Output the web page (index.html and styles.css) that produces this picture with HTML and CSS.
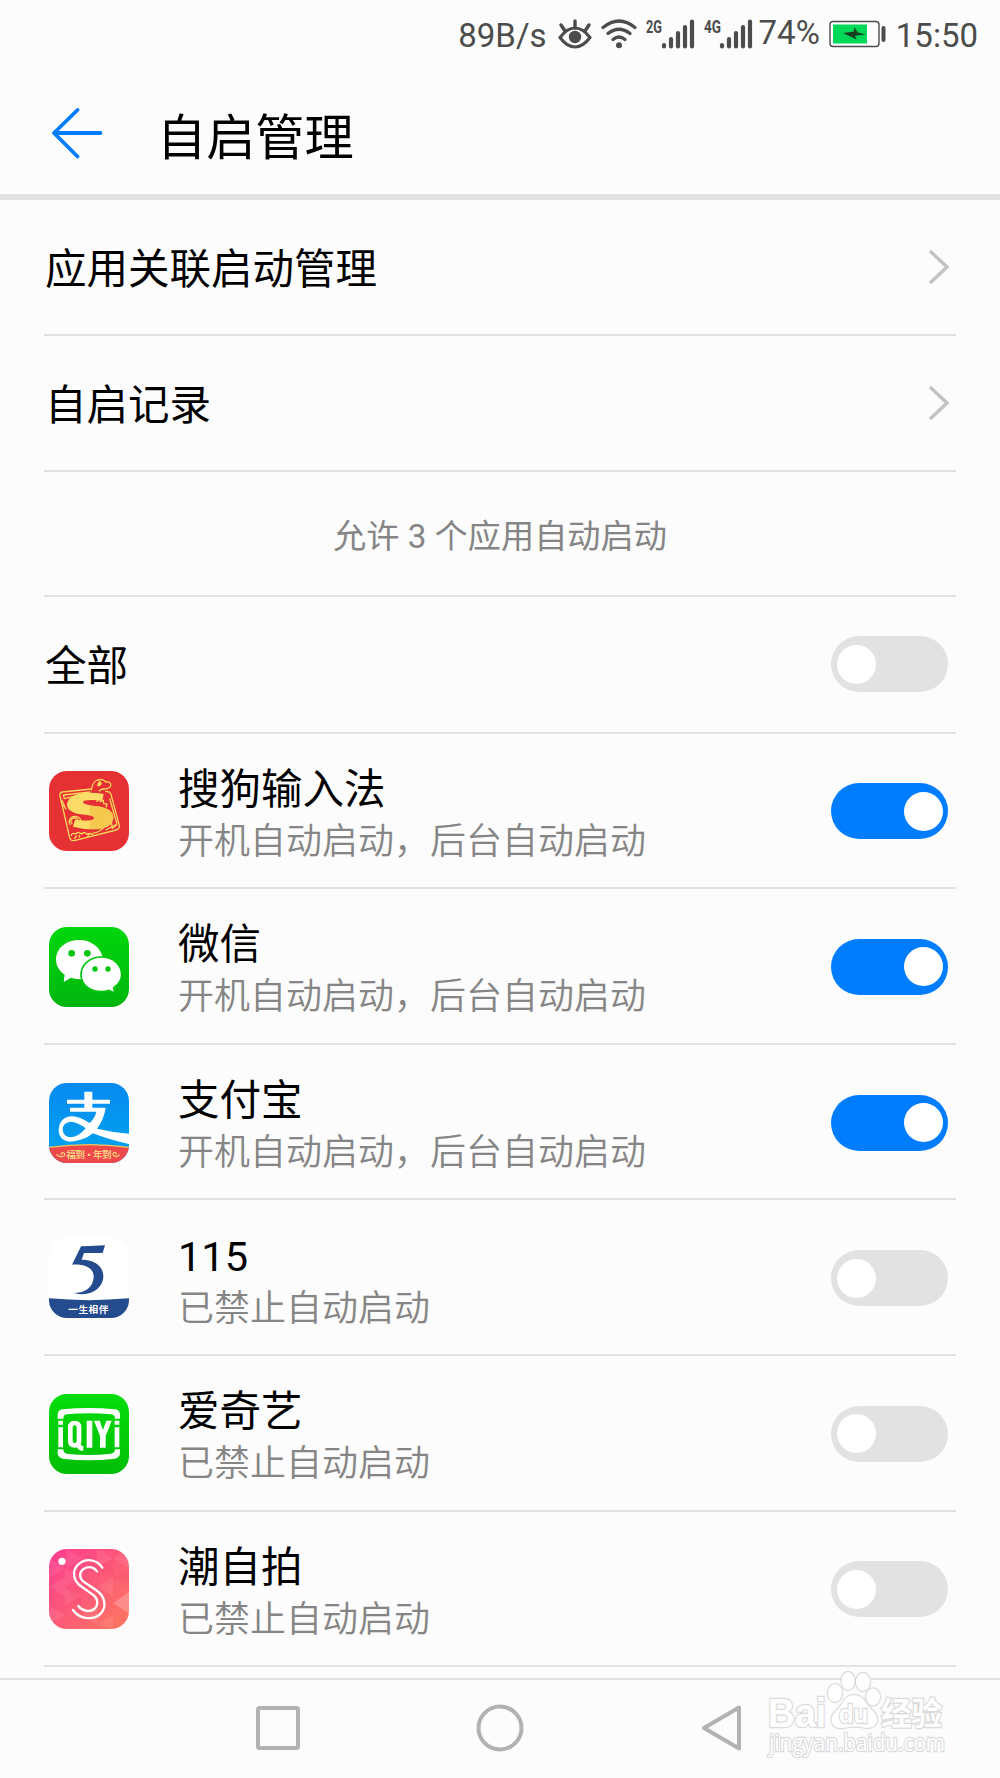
FILE: index.html
```html
<!DOCTYPE html>
<html lang="zh-CN">
<head>
    <meta charset="UTF-8">
    <meta name="viewport" content="width=device-width, initial-scale=1.0">
    <title>自启管理</title>
    <link rel="stylesheet" href="styles.css">
</head>
<body>
    <div class="status-bar">
        <span class="speed">89B/s</span>
        <svg class="eye" viewBox="0 0 34 30" width="34" height="30">
            <path d="M2 18.500Q9 9 17 9T32 18.500Q25 28 17 28T2 18.500Z" fill="none" stroke="#4c4c4c" stroke-width="3"/>
            <circle cx="17" cy="18" r="6.200" fill="#4c4c4c"/>
            <path d="M17 2v7M3 6l4 6M31 6l-4 6" fill="none" stroke="#4c4c4c" stroke-width="3.400" stroke-linecap="round"/>
        </svg>
        <svg class="wifi" viewBox="0 0 36 30" width="36" height="30">
            <path d="M2 8.500Q18-4.500 34 8.500M7 14.500Q18 6 29 14.500M12 20.500Q18 15.500 24 20.500" fill="none" stroke="#4c4c4c" stroke-width="3.200" stroke-linecap="round"/>
            <circle cx="18" cy="26.300" r="3" fill="#4c4c4c"/>
        </svg>
        <svg class="signal" viewBox="0 0 50 32" width="50" height="32">
            <text class="net" x="0" y="14.500" textLength="16" lengthAdjust="spacingAndGlyphs">2G</text>
            <path d="M18 27v1.500M25 21v7.500M32 15v13.500M39 9v19.500M46 3.500v25" stroke="#4c4c4c" stroke-width="4.200" stroke-linecap="round"/>
        </svg>
        <svg class="signal second" viewBox="0 0 50 32" width="50" height="32">
            <text class="net" x="0" y="14.500" textLength="17" lengthAdjust="spacingAndGlyphs">4G</text>
            <path d="M18 27v1.500M25 21v7.500M32 15v13.500M39 9v19.500M46 3.500v25" stroke="#4c4c4c" stroke-width="4.200" stroke-linecap="round"/>
        </svg>
        <span class="percent">74%</span>
        <svg class="battery" viewBox="0 0 58 28" width="58" height="28">
            <rect x="1" y="1.500" width="49" height="25" rx="3" fill="none" stroke="#4c4c4c" stroke-width="1.400"/>
            <rect x="4" y="4.500" width="34" height="19" fill="#00d957"/>
            <path d="M14 13l11 -1.500 0-4.500 4 5.500 8 2-11 1.200 1.500 3.800z" fill="#17401f"/>
            <path d="M54.500 8v12" stroke="#4c4c4c" stroke-width="4" stroke-linecap="round"/>
        </svg>
        <span class="time">15:50</span>
    </div>

    <header class="header">
        <svg class="back" viewBox="0 0 52 52" width="52" height="52">
            <path d="M26.500 3L3 26l23.500 23.500M3 26h46.500" fill="none" stroke="#007dff" stroke-width="3.800" stroke-linecap="round" stroke-linejoin="round"/>
        </svg>
        <h1>自启管理</h1>
    </header>

    <main class="list">
        <div class="row">
            <span class="name">应用关联启动管理</span>
            <svg class="chevron" viewBox="0 0 22 36" width="22" height="36"><path d="M2 2l17 16L2 34"/></svg>
        </div>
        <div class="row">
            <span class="name">自启记录</span>
            <svg class="chevron" viewBox="0 0 22 36" width="22" height="36"><path d="M2 2l17 16L2 34"/></svg>
        </div>
        <div class="row summary">允许 3 个应用自动启动</div>
        <div class="row all">
            <span class="name">全部</span>
            <span class="switch"></span>
        </div>

        <div class="row app">
            <svg class="icon" viewBox="58 63 240 240">
                <rect x="58" y="63" width="240" height="240" fill="#e53034"/>
                <g fill="none" stroke="#f9d65c" stroke-width="4" stroke-linejoin="round">
                    <path d="M185 117L98 126Q89 128 91 138L120 263Q123 273 134 272L260 240Q270 236 269 226L244 133Q240 123 226 124"/>
                    <path d="M182 126L101 135L104 146L160 133M96 150L105 168M99 163L110 178M240 145L262 222L228 240"/>
                    <path d="M122 225a18 16 0 1 1 25 3M128 222a11 10 0 1 1 13 0M200 155l8-8 5 8 8-4 1 10 10 1-3 10M188 250q20-2 35-18M225 230l20-15 3 20 13-10"/>
                    <path d="M124 258q4-12 14-6q8-9 17 0q10-8 17 1q12-7 19 5M134 267l7-10M150 263l-2-8M174 261l4-9"/>
                    <path d="M185 121q3-25 18-31q16-5 26 6q16-2 14 12q-5 9-20 9q-10-1-15 7" fill="#e53034"/>
                </g>
                <path d="M207 94q9-2 9 8q-6 11-14 5z" fill="#f9d65c"/>
                <path d="M222 132L218 152Q205 149 184 150Q160 150 160 157Q161 165 201 169Q250 175 251 203Q250 237 190 238Q160 238 130 230L136 209Q165 213 184 211Q197 208 192 201Q188 196 165 194Q114 190 112 164Q115 129 180 128Q202 128 222 132Z" fill="#fbdc68"/>
                <path d="M180 167Q192 168 201 169Q250 175 251 203Q250 236 180 238V211Q197 210 192 201Q189 197 180 195Z" fill="#f5c94d"/>
            </svg>
            <div class="info"><div class="name">搜狗输入法</div><div class="desc">开机自动启动，后台自动启动</div></div>
            <span class="switch on"></span>
        </div>

        <div class="row app">
            <svg class="icon" viewBox="58 51 240 240">
                <defs><linearGradient id="wechat" x2="0" y2="1"><stop offset="0" stop-color="#00d80c"/><stop offset="1" stop-color="#00b50e"/></linearGradient></defs>
                <rect x="58" y="51" width="240" height="240" fill="url(#wechat)"/>
                <path d="M149 90C108 90 79 116 79 149Q79 176 105 194L102 216L124 203Q137 208 158 208L220 145C214 113 185 90 149 90Z" fill="#fff"/>
                <path d="M216 141C180 141 154 164 154 194C154 224 181 245 216 245Q229 245 238 241L255 250L252 233Q276 217 276 194C276 165 251 141 216 141Z" fill="#fff" stroke="#00c50d" stroke-width="5"/>
                <g fill="#00c50d"><circle cx="126" cy="130" r="10"/><circle cx="173" cy="130" r="10"/><circle cx="196" cy="177" r="8"/><circle cx="235" cy="177" r="8"/></g>
            </svg>
            <div class="info"><div class="name">微信</div><div class="desc">开机自动启动，后台自动启动</div></div>
            <span class="switch on"></span>
        </div>

        <div class="row app">
            <svg class="icon" viewBox="58 52 240 240">
                <defs><linearGradient id="alipay" x2="0" y2="1"><stop offset="0" stop-color="#078af0"/><stop offset="1" stop-color="#00a5ef"/></linearGradient></defs>
                <rect x="58" y="52" width="240" height="240" fill="url(#alipay)"/>
                <path d="M164 78h24v24h53v12h-53v12h40q-5 35-26 63Q245 199 298 204V235Q237 222 190 203Q161 226 122 228Q86 225 87 191Q91 153 127 152Q150 153 180 172Q196 157 200 138H121v-12h43v-12h-52v-12h52z" fill="#fff"/>
                <path d="M168 188Q143 168 122 168Q99 171 99 192Q101 213 123 215Q148 213 168 188Z" fill="#079aef"/>
                <path d="M58 245Q178 229 298 245V292H58Z" fill="#ee494a"/>
                <path d="M58 245Q178 229 298 245" fill="none" stroke="#f8c55d" stroke-width="4"/>
                <g fill="none" stroke="#fbc878" stroke-width="4"><path d="M80 266q10 11 23 5q6-9-4-10q-7 2-3 6M270 266q-8 11-18 4q-5-8 3-10q7 1 4 6"/></g>
                <text class="badge gold" x="110" y="277" textLength="136">福到·年到</text>
            </svg>
            <div class="info"><div class="name">支付宝</div><div class="desc">开机自动启动，后台自动启动</div></div>
            <span class="switch on"></span>
        </div>

        <div class="row app">
            <svg class="icon" viewBox="58 54 240 240">
                <rect x="58" y="54" width="240" height="240" fill="#fff"/>
                <path d="M153 81Q156 77 163 79L226 76L219 99H163L156 119C195 118 221 139 221 169C221 205 181 233 133 219C167 219 192 200 192 170C192 145 169 132 127 134Z" fill="#234b8d"/>
                <path d="M58 235Q178 246 298 235V294H58Z" fill="#234b8d"/>
                <text class="badge" x="116" y="279" textLength="120">一生相伴</text>
            </svg>
            <div class="info"><div class="name">115</div><div class="desc">已禁止自动启动</div></div>
            <span class="switch"></span>
        </div>

        <div class="row app">
            <svg class="icon" viewBox="58 56 240 240">
                <defs><linearGradient id="iqiyi" x2="0" y2="1"><stop offset="0" stop-color="#06dd0b"/><stop offset="1" stop-color="#00be06"/></linearGradient></defs>
                <rect x="58" y="56" width="240" height="240" fill="url(#iqiyi)"/>
                <path d="M84 130V119Q84 104 99 102Q178 94 256 102Q271 104 271 119V130H256Q256 118 244 117Q178 110 111 117Q101 118 101 130ZM84 222H101Q101 233 111 235Q178 243 244 235Q256 233 256 222H271V233Q271 246 256 250Q178 259 99 250Q84 246 84 233Z" fill="#fff"/>
                <g fill="#fff"><path d="M86 136h14v12H86zM86 156h14v60H86zM171 136h17v81h-17zM255 136h14v12h-14zM255 156h14v60h-14zM193 136h17l10 28 10-28h16l-18 46v35h-17v-35z"/></g>
                <path d="M135 143q-13 0-13 13v41q0 13 13 13t13-13v-41q0-13-13-13ZM145 207q3 12 16 13" fill="none" stroke="#fff" stroke-width="14"/>
            </svg>
            <div class="info"><div class="name">爱奇艺</div><div class="desc">已禁止自动启动</div></div>
            <span class="switch"></span>
        </div>

        <div class="row app">
            <svg class="icon" viewBox="58 57 240 240">
                <defs><linearGradient id="selfie" x2="1" y2="1"><stop offset="0" stop-color="#fc3b91"/><stop offset=".5" stop-color="#fc5a78"/><stop offset="1" stop-color="#fd795e"/></linearGradient></defs>
                <rect x="58" y="57" width="240" height="240" fill="url(#selfie)"/>
                <g fill="#fff" fill-opacity=".08">
                    <path d="M110 57l48 28-48 28zM58 85l48 29-48 30zM106 114l48 28-48 28zM58 170l48-28v56zM154 198l-48 28v-56zM58 226l48 28-48 28zM154 254l48-28v56zM202 57l48 28-48 28zM250 85l48-28v56zM202 170l48-28v56zM202 282l48-28v43z"/>
                    <path d="M250 220l48-35v65z" fill-opacity=".22"/>
                </g>
                <path d="M110 170l44 28v56zM202 113l48 28v-56zM250 142l48 28v-57z" fill="#e51e5d" fill-opacity=".08"/>
                <circle cx="97" cy="94" r="11" fill="#fff"/>
                <g fill="none" stroke="#fff" stroke-width="7" stroke-linecap="round">
                    <path d="M218 113C202 88 169 83 146 103C126 121 130 152 153 168L188 193C206 205 207 225 194 237C181 247 158 244 146 228"/>
                    <path d="M202 124C190 108 171 108 159 119C147 130 150 147 163 156L200 181C226 199 232 229 214 250C190 273 149 268 130 240"/>
                </g>
            </svg>
            <div class="info"><div class="name">潮自拍</div><div class="desc">已禁止自动启动</div></div>
            <span class="switch"></span>
        </div>
    </main>

    <nav class="nav-bar">
        <svg viewBox="0 0 48 48" width="48" height="48"><rect x="4" y="4" width="40" height="40" rx="1.500"/></svg>
        <svg viewBox="0 0 48 48" width="48" height="48"><circle cx="24" cy="24" r="21.500"/></svg>
        <svg viewBox="0 0 48 48" width="48" height="48"><path d="M6 24L41 3.500v41z"/></svg>
    </nav>

    <svg class="watermark" viewBox="0 0 190 90" width="190" height="90">
        <g class="outline">
            <text class="brand" x="8" y="57" textLength="58" lengthAdjust="spacingAndGlyphs">Bai</text>
            <ellipse cx="75" cy="23" rx="7" ry="9"/>
            <ellipse cx="88" cy="11" rx="6.500" ry="9"/>
            <ellipse cx="103" cy="12" rx="7" ry="9"/>
            <ellipse cx="113" cy="27" rx="7" ry="8.500"/>
            <path d="M94 25C83 26 83 35 77 40C67 49 72 59 83 58Q94 55 107 58C119 58 120 47 112 40C106 35 105 26 94 25Z"/>
            <text class="du" x="79" y="53" textLength="29" lengthAdjust="spacingAndGlyphs">du</text>
            <text class="brand-cn" x="121" y="55" textLength="61" lengthAdjust="spacingAndGlyphs">经验</text>
            <text class="site" x="9" y="81" textLength="176" lengthAdjust="spacingAndGlyphs">jingyan.baidu.com</text>
        </g>
    </svg>
</body>
</html>
```
FILE: styles.css
```css
* {
    box-sizing: border-box;
}
body {
    margin: 0;
    width: 1000px;
    height: 1778px;
    position: relative;
    overflow: hidden;
    display: flex;
    flex-direction: column;
    background-color: #fcfcfc;
    color: #000;
    font-family: Roboto, "Noto Sans CJK SC", sans-serif;
}
svg {
    display: block;
    flex-shrink: 0;
}
.status-bar {
    height: 68px;
    padding-right: 22px;
    display: flex;
    align-items: center;
    justify-content: flex-end;
    color: #4c4c4c;
    font-size: 33px;
    line-height: 66px;
    white-space: nowrap;
}
.speed,
.time {
    padding-top: 3px;
}
.speed {
    margin-right: 11px;
}
.eye {
    margin-right: 9px;
}
.wifi {
    margin-right: 9px;
}
.signal {
    margin-right: 8px;
}
.signal.second {
    margin-right: 5px;
}
.net {
    font: bold 18px Roboto, sans-serif;
    fill: #4c4c4c;
}
.percent {
    margin-right: 9px;
    padding-bottom: 3px;
}
.battery {
    margin-right: 9px;
}
.header {
    height: 132px;
    padding: 0 0 0 51px;
    display: flex;
    align-items: center;
    border-bottom: 6px solid #e2e2e2;
}
.header .back {
    margin-top: 4px;
}
.header h1 {
    margin: 13px 0 0 54px;
    font-size: 49.2px;
    font-weight: 400;
    line-height: 60px;
}
.list {
    margin: 0 44px;
}
.row {
    height: 136px;
    padding: 0 8px 0 1px;
    display: flex;
    align-items: center;
    justify-content: space-between;
    border-bottom: 2px solid #e2e2e2;
}
.name {
    padding-top: 5px;
    font-size: 41.5px;
    line-height: 53px;
}
.chevron {
    margin-right: -2px;
}
.chevron path {
    fill: none;
    stroke: #c2c2c2;
    stroke-width: 3.4;
}
.summary {
    height: 125px;
    padding: 0;
    justify-content: center;
    color: #858585;
    font-size: 33.2px;
}
.all {
    height: 136.6px;
}
.app {
    height: 155.6px;
    padding-top: 2px;
    padding-left: 5px;
}
.icon {
    width: 80px;
    height: 80px;
    border-radius: 18px;
    overflow: hidden;
}
.info {
    flex: 1;
    margin-left: 49px;
    padding-top: 4px;
}
.desc {
    color: #858585;
    font-size: 36px;
    font-weight: 350;
    line-height: 53px;
}
.badge {
    font: bold 29px "Noto Sans CJK SC", sans-serif;
    fill: #fff;
}
.badge.gold {
    fill: #fbd084;
}
.switch {
    width: 117px;
    height: 56px;
    padding: 0 5.5px;
    display: flex;
    align-items: center;
    border-radius: 28px;
    background-color: #e2e2e2;
}
.switch::before {
    content: "";
    width: 39px;
    height: 39px;
    border-radius: 50%;
    background-color: #fff;
}
.switch.on {
    justify-content: flex-end;
    background-color: #007dff;
}
.nav-bar {
    margin-top: auto;
    height: 100px;
    padding: 0 254px 2px;
    display: flex;
    align-items: center;
    justify-content: space-between;
    border-top: 2px solid #e2e2e2;
}
.nav-bar svg {
    fill: none;
    stroke: #b2b2b2;
    stroke-width: 4;
    stroke-linejoin: round;
}
/* sits over the navigation bar */
.watermark {
    position: absolute;
    left: 760px;
    top: 1670px;
}
.outline {
    fill: #fff;
    stroke: #dadada;
    stroke-width: 2.4;
    paint-order: stroke;
}
.brand {
    font: bold 40px "Liberation Sans", sans-serif;
}
.du {
    font: bold 26px "Liberation Sans", sans-serif;
}
.brand-cn {
    font: bold 32px "Noto Sans CJK SC", sans-serif;
}
.site {
    font: 23px "Open Sans", sans-serif;
}
```
